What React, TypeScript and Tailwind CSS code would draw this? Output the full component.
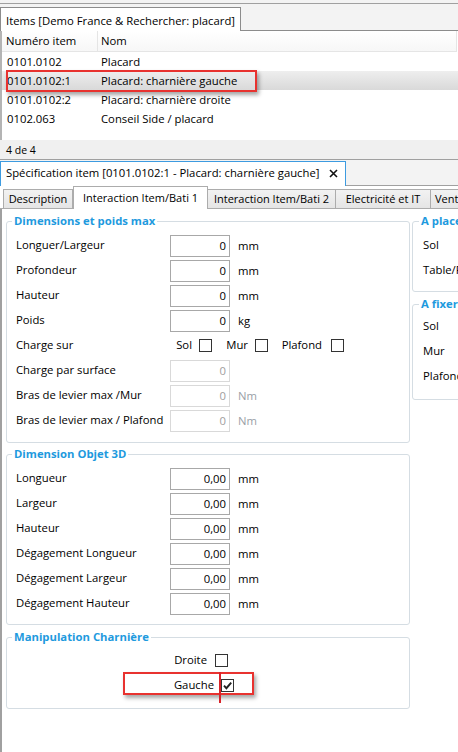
import React from "react";

const font = "font-['Open_Sans','Noto_Sans',sans-serif]";

function Checkbox({ checked }: { checked?: boolean }) {
  return (
    <div className="w-[13px] h-[13px] border border-[#333333] bg-white flex items-center justify-center shrink-0">
      {checked && (
        <svg width="11" height="11" viewBox="0 0 11 11">
          <path d="M2 5.6 L4.4 8.2 L9.2 2.6" stroke="#222222" strokeWidth="1.9" fill="none" />
        </svg>
      )}
    </div>
  );
}

function Field({ value, disabled }: { value: string; disabled?: boolean }) {
  return (
    <div
      className={`w-[60px] h-[22px] shrink-0 border flex items-center justify-end pr-[3px] bg-white ${
        disabled ? "border-[#d9d9d9] text-[#a0a0a0]" : "border-[#a8a8a8] text-black"
      }`}
    >
      {value}
    </div>
  );
}

function Row({
  label,
  value,
  unit,
  disabled,
}: {
  label: string;
  value: string;
  unit?: string;
  disabled?: boolean;
}) {
  return (
    <div className="h-[25px] flex items-center">
      <div className="w-[154px] shrink-0 whitespace-nowrap pb-[2px]">{label}</div>
      <Field value={value} disabled={disabled} />
      {unit && <span className={`ml-[8px] ${disabled ? "text-[#9aa0a6]" : ""}`}>{unit}</span>}
    </div>
  );
}

function Group({
  title,
  children,
  className,
  legendMl,
}: {
  title: string;
  children: React.ReactNode;
  className?: string;
  legendMl: string;
}) {
  return (
    <fieldset className={`border border-[#d5dde3] rounded-[3px] min-w-0 ${className ?? ""}`}>
      <legend className={`${legendMl} px-[2px] leading-[16px] font-bold text-[#1e9ade] whitespace-nowrap`}>{title}</legend>
      {children}
    </fieldset>
  );
}

const items = [
  { num: "0101.0102", nom: "Placard" },
  { num: "0101.0102:1", nom: "Placard: charnière gauche", sel: true },
  { num: "0101.0102:2", nom: "Placard: charnière droite" },
  { num: "0102.063", nom: "Conseil Side / placard" },
];

const inactiveTab =
  "shrink-0 h-[20px] border border-[#acacac] bg-gradient-to-b from-[#f2f2f2] to-[#e5e5e5] flex items-center justify-center";

export default function App() {
  return (
    <div
      className={`relative w-[458px] h-[752px] overflow-hidden bg-[#f3f3f3] text-[11.3px] leading-[16px] text-black flex flex-col ${font}`}
    >
      <div className="h-[4px] shrink-0 border-b border-[#a0a0a0]" />
      <div className="h-[27px] shrink-0 flex items-end">
        <div className="w-[241px] shrink-0 h-[24px] bg-white border border-b-0 border-[#8c8c8c] pl-[5px] pt-[5px] whitespace-nowrap">
          Items [Demo France &amp; Rechercher: placard]
        </div>
        <div className="flex-1 h-full border-b border-[#8c8c8c]" />
      </div>

      {/* list */}
      <div className="h-[109px] shrink-0 bg-white border-l-2 border-[#b4b4b4]">
        <div className="h-[21px] w-[455px] flex border-b border-[#e5e5e5] bg-gradient-to-b from-white to-[#f7f7f7]">
          <div className="w-[96px] shrink-0 border-r border-[#e5e5e5] pl-[4px] flex items-center">Numéro item</div>
          <div className="flex-1 border-r border-[#e5e5e5] pl-[3px] flex items-center">Nom</div>
        </div>
        {items.map((it) => (
          <div
            key={it.num}
            className={`h-[19px] flex items-center whitespace-nowrap ${
              it.sel ? "bg-gradient-to-b from-[#eeeeee] to-[#d9d9d9]" : ""
            }`}
          >
            <div className="w-[96px] shrink-0 pl-[5px]">{it.num}</div>
            <div className="pl-[3px]">{it.nom}</div>
          </div>
        ))}
      </div>

      {/* footer */}
      <div className="h-[20px] shrink-0 bg-[#f0f0f0] border-b border-[#a0a0a0] pl-[6px] flex items-center text-[10.5px]">
        4 de 4
      </div>
      <div className="h-[1px] shrink-0" />

      {/* spec tab strip */}
      <div className="h-[25px] shrink-0 flex">
        <div className="w-[346px] shrink-0 bg-white border border-b-0 border-[#3d9be0] pl-[5px] pt-[3px] flex items-start whitespace-nowrap">
          <span>Spécification item [0101.0102:1 - Placard: charnière gauche]</span>
          <svg className="ml-[9px] mt-[4px]" width="9" height="9" viewBox="0 0 9 9">
            <path d="M1 1 L8 8 M8 1 L1 8" stroke="#111111" strokeWidth="1.6" />
          </svg>
        </div>
        <div className="flex-1 border-b border-[#a0a0a0]" />
      </div>

      {/* sub tabs */}
      <div className="h-[23px] shrink-0 bg-white flex items-end whitespace-nowrap text-[11px]">
        <div className="w-[3px] shrink-0 h-full border-b border-[#acacac]" />
        <div className={`w-[70px] ${inactiveTab}`}>Description</div>
        <div className="w-[135px] shrink-0 h-[23px] border border-b-0 border-[#acacac] bg-white flex items-center justify-center pb-[1px]">
          Interaction Item/Bati 1
        </div>
        <div className={`w-[128px] border-l-0 ${inactiveTab}`}>Interaction Item/Bati 2</div>
        <div className={`w-[95px] border-l-0 ${inactiveTab}`}>Electricité et IT</div>
        <div className="w-[80px] shrink-0 h-[20px] border border-l-0 border-[#acacac] bg-gradient-to-b from-[#f2f2f2] to-[#e5e5e5] flex items-center pl-[4px]">
          Ventilation
        </div>
        <div className="flex-1 h-full border-b border-[#acacac]" />
      </div>

      {/* content */}
      <div className="flex-1 bg-white border-l-2 border-[#a0a0a0] pt-[4px] pl-[4px] flex">
        <div className="w-[404px] shrink-0 flex flex-col">
          <Group title="Dimensions et poids max" legendMl="ml-[5px]">
            <div className="pt-[4px] pb-[9px] pl-[9px]">
              <Row label="Longuer/Largeur" value="0" unit="mm" />
              <Row label="Profondeur" value="0" unit="mm" />
              <Row label="Hauteur" value="0" unit="mm" />
              <Row label="Poids" value="0" unit="kg" />
              <div className="h-[25px] flex items-center whitespace-nowrap">
                <div className="w-[154px] shrink-0 pb-[2px]">Charge sur</div>
                <div className="w-[22px] shrink-0 text-right pb-[2px]">Sol</div>
                <div className="ml-[7px]">
                  <Checkbox />
                </div>
                <div className="w-[36px] shrink-0 text-right pb-[2px]">Mur</div>
                <div className="ml-[7px]">
                  <Checkbox />
                </div>
                <div className="w-[54px] shrink-0 text-right pb-[2px]">Plafond</div>
                <div className="ml-[9px]">
                  <Checkbox />
                </div>
              </div>
              <Row label="Charge par surface" value="0" disabled />
              <Row label="Bras de levier max /Mur" value="0" unit="Nm" disabled />
              <Row label="Bras de levier max / Plafond" value="0" unit="Nm" disabled />
            </div>
          </Group>

          <Group title="Dimension Objet 3D" legendMl="ml-[5px]" className="mt-[3px]">
            <div className="pt-[4px] pb-[8px] pl-[9px]">
              <Row label="Longueur" value="0,00" unit="mm" />
              <Row label="Largeur" value="0,00" unit="mm" />
              <Row label="Hauteur" value="0,00" unit="mm" />
              <Row label="Dégagement Longueur" value="0,00" unit="mm" />
              <Row label="Dégagement Largeur" value="0,00" unit="mm" />
              <Row label="Dégagement Hauteur" value="0,00" unit="mm" />
            </div>
          </Group>

          <Group title="Manipulation Charnière" legendMl="ml-[5px]" className="mt-[4px]">
            <div className="pt-[3px] pb-[10px] pl-[9px]">
              <div className="h-[25px] flex items-center">
                <div className="w-[191px] shrink-0 text-right pb-[2px]">Droite</div>
                <div className="ml-[8px]">
                  <Checkbox />
                </div>
              </div>
              <div className="h-[25px] flex items-center">
                <div className="w-[198px] shrink-0 text-right pb-[2px]">Gauche</div>
                <div className="ml-[7px]">
                  <Checkbox checked />
                </div>
              </div>
            </div>
          </Group>
        </div>

        <div className="w-[200px] shrink-0 ml-[2px] flex flex-col">
          <Group title="A placer sur" legendMl="ml-[6px]">
            <div className="pt-[4px] pb-[8px] pl-[10px]">
              <div className="h-[25px] flex items-center pb-[2px]">Sol</div>
              <div className="h-[25px] flex items-center pb-[2px]">Table/Plan de travail</div>
            </div>
          </Group>
          <Group title="A fixer sur" legendMl="ml-[6px]" className="mt-[4px]">
            <div className="pt-[2px] pb-[10px] pl-[10px]">
              <div className="h-[25px] flex items-center pb-[2px]">Sol</div>
              <div className="h-[25px] flex items-center pb-[2px]">Mur</div>
              <div className="h-[25px] flex items-center pb-[2px]">Plafond</div>
            </div>
          </Group>
        </div>
      </div>

      {/* annotations */}
      <div className="absolute left-[6px] top-[70px] w-[251px] h-[22px] border-2 border-[#e8322f] shadow-[2px_3px_4px_rgba(0,0,0,0.35)]" />
      <div className="absolute left-[123px] top-[672px] w-[131px] h-[23px] border-2 border-[#e8322f] shadow-[2px_3px_4px_rgba(0,0,0,0.35)]" />
      <div className="absolute left-[219px] top-[672px] w-[2px] h-[31px] bg-[#d8232a]" />
    </div>
  );
}
